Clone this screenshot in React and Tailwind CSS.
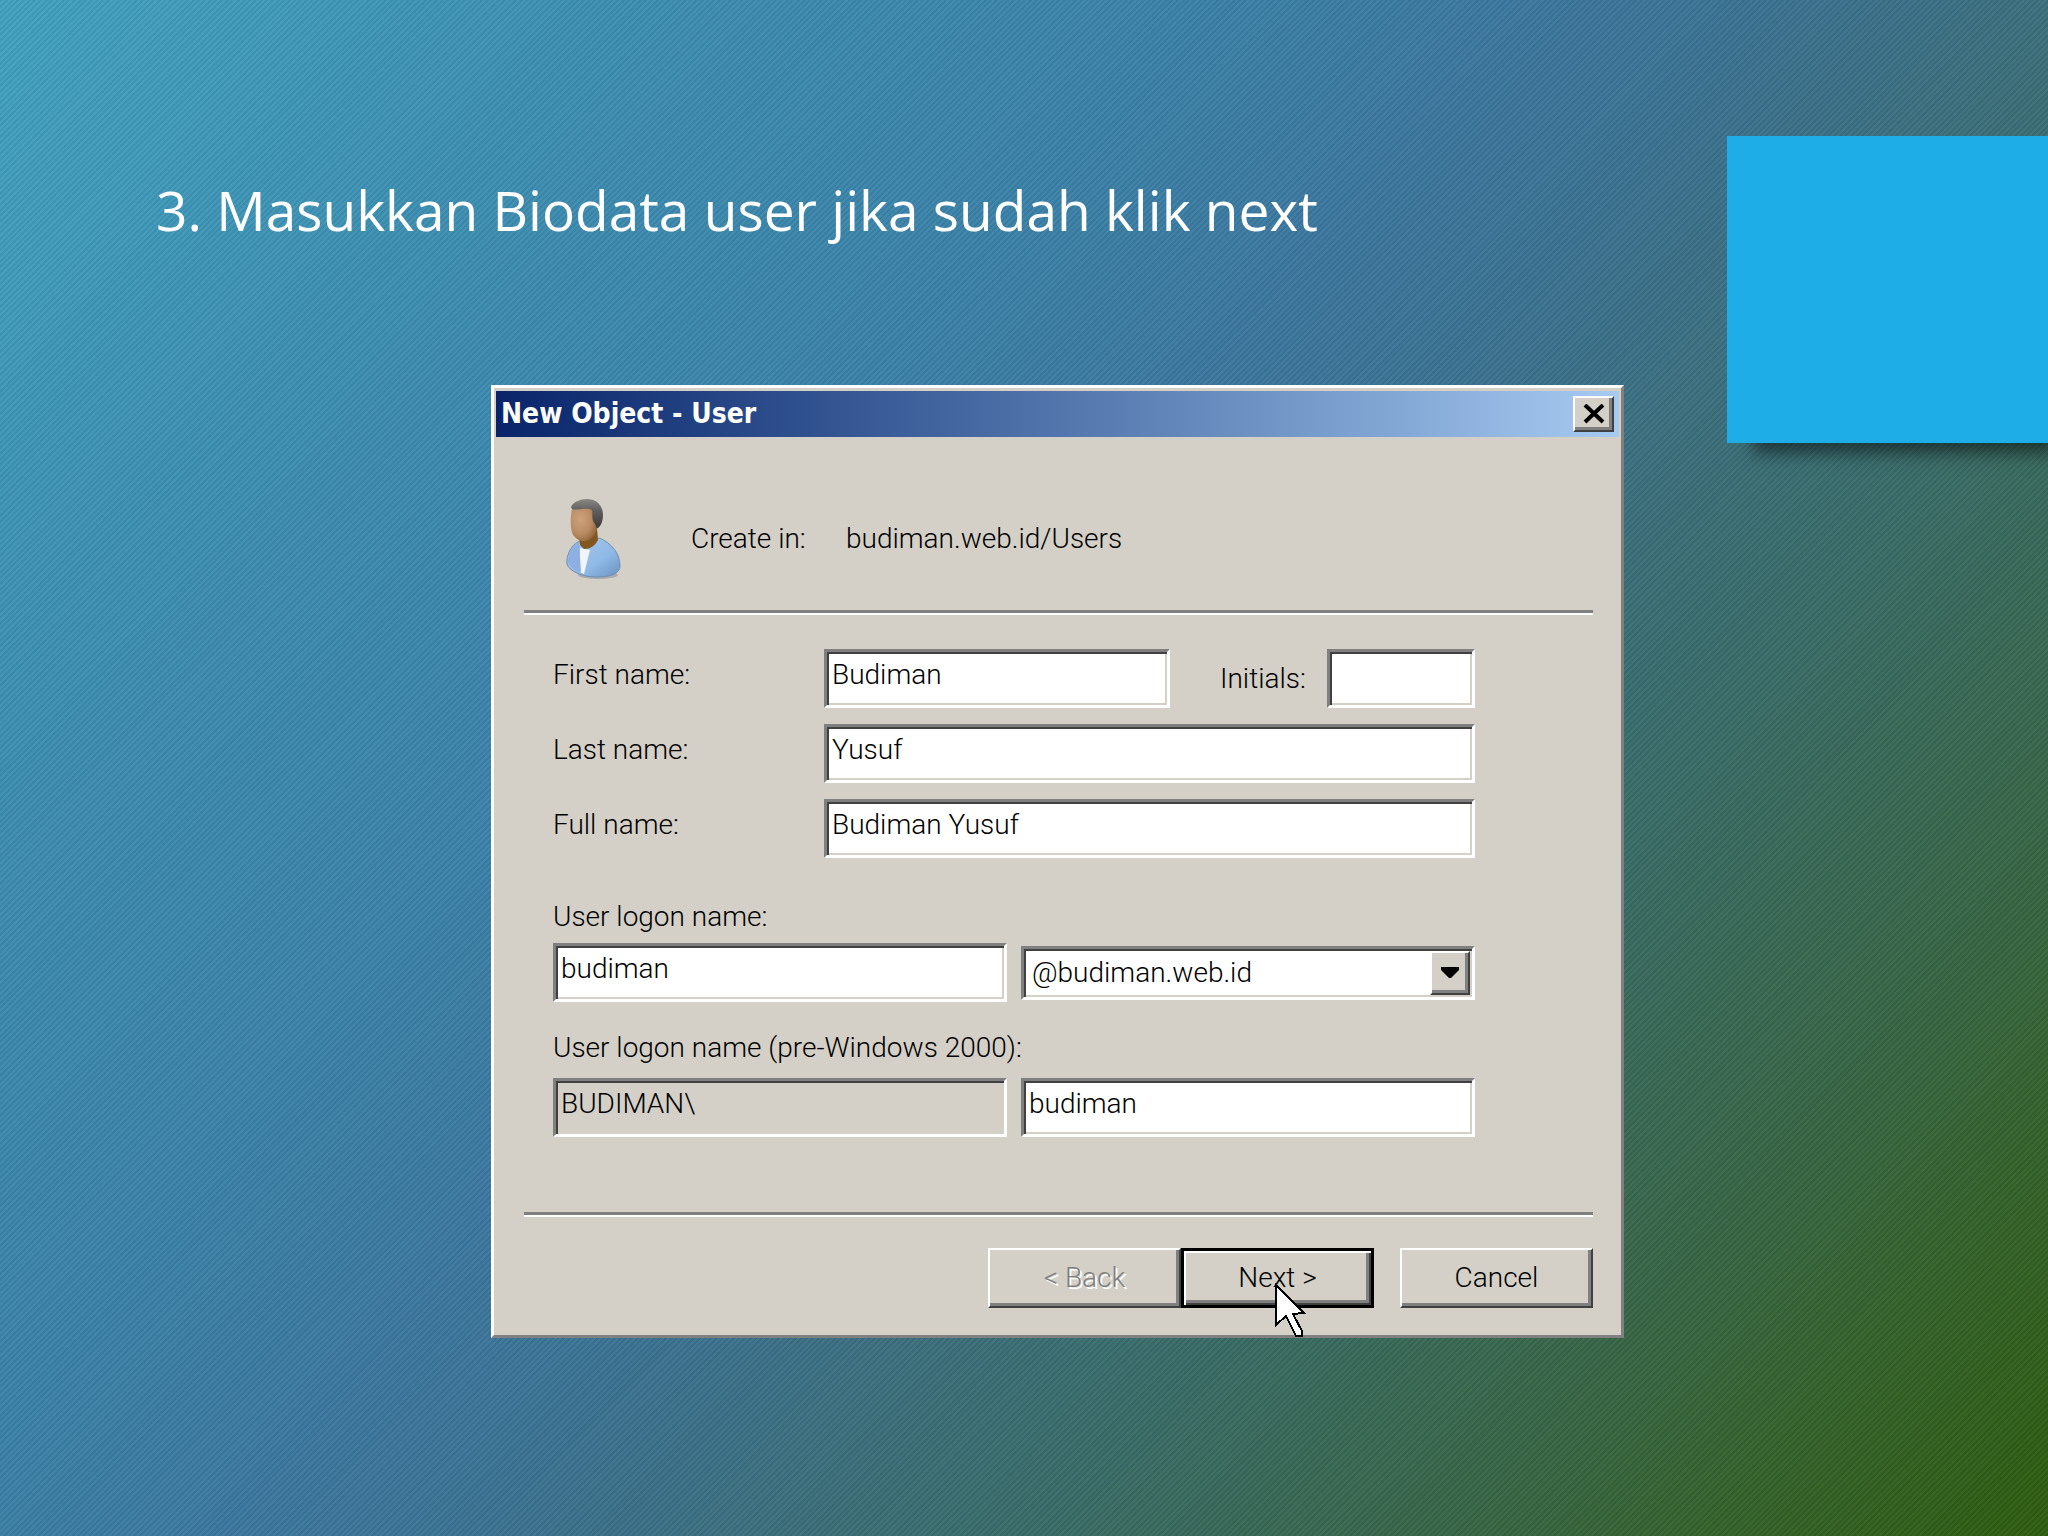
import React, { useState } from "react";

const RAISED =
  "border-2 border-t-white border-l-white border-r-[#404040] border-b-[#404040] shadow-[inset_-3px_-3px_0_#808080] bg-[#d4d0c8]";
const SUNKEN =
  "border-[3px] border-t-[#808080] border-l-[#808080] border-r-white border-b-white shadow-[inset_2px_2px_0_#404040,inset_-2px_-2px_0_#d4d0c8]";

const UserIcon = () => (
  <svg width="58" height="82" viewBox="0 0 58 82" aria-hidden="true">
    <defs>
      <linearGradient id="shirt" x1="0" y1="0" x2="1" y2="1">
        <stop offset="0" stopColor="#a9c8ee" />
        <stop offset="0.6" stopColor="#8fb9e6" />
        <stop offset="1" stopColor="#6a92c0" />
      </linearGradient>
      <radialGradient id="skin" cx="0.35" cy="0.4" r="0.75">
        <stop offset="0" stopColor="#cda37d" />
        <stop offset="0.55" stopColor="#b98b62" />
        <stop offset="1" stopColor="#85582b" />
      </radialGradient>
      <linearGradient id="hair" x1="0" y1="0" x2="0" y2="1">
        <stop offset="0" stopColor="#8a8883" />
        <stop offset="0.4" stopColor="#5f5f60" />
        <stop offset="1" stopColor="#3d3a38" />
      </linearGradient>
    </defs>
    <ellipse cx="32" cy="77" rx="20" ry="4" fill="#8c9399" opacity="0.6" />
    <path
      d="M12 44C5 47 0 58 1 66C3 73 16 79 30 79C44 79 54 76 54 68C54 56 46 45 33 40L14 43Z"
      fill="url(#shirt)"
      stroke="#6f8eb0"
      strokeWidth="1"
    />
    <path d="M14 50L24 52L18 76L14 74Z" fill="#f1f5fb" />
    <path d="M13 44L15 74C8 72 3 68 2 64C2 56 6 47 13 44Z" fill="#8db0e2" />
    <path d="M13 38L31 30L32 42C29 48 24 51 18 51L14 47Z" fill="#82561f" />
    <path
      d="M6 11C4 20 4 33 8 38C11 42 16 44 20 43C27 41 31 34 32 27L31 11L18 7Z"
      fill="url(#skin)"
    />
    <path
      d="M5 9C7 4 14 1 21 1C31 1 37 8 37 17C37 23 35 28 32 30C30 31 30 27 29 26C25 22 27 15 26 12C19 9 12 13 6 11Z"
      fill="url(#hair)"
    />
  </svg>
);

const MouseCursor = () => (
  <svg
    className="pointer-events-none absolute left-[93px] top-[35px] z-10"
    width="34"
    height="56"
    viewBox="-1 -2 34 56"
    shapeRendering="crispEdges"
    aria-hidden="true"
  >
    <path
      d="M1 0L1 40L11 31L21 51L27 51L27 46L18 29L29 28Z"
      fill="#ffffff"
      stroke="#000000"
      strokeWidth="2"
    />
  </svg>
);

const Divider = () => (
  <div className="h-[5px] border-t-[3px] border-b-2 border-t-[#808080] border-b-white" />
);

const TextField = ({ className = "", ...props }) => (
  <input
    type="text"
    className={`h-[59px] min-w-0 rounded-none px-[5px] pb-[8px] outline-none ${SUNKEN} ${className}`}
    {...props}
  />
);

const App = () => {
  const [user, setUser] = useState({
    firstName: "Budiman",
    initials: "",
    lastName: "Yusuf",
    fullName: "Budiman Yusuf",
    logonName: "budiman",
    domain: "@budiman.web.id",
    oldLogonName: "budiman",
  });

  const handleChange = (e) => {
    setUser({ ...user, [e.target.id]: e.target.value });
  };

  return (
    <div className="flex min-h-screen items-start bg-[repeating-linear-gradient(135deg,rgba(0,20,40,0.06)_0px,rgba(0,20,40,0.06)_2px,rgba(255,255,255,0.03)_2px,rgba(255,255,255,0.03)_4px),linear-gradient(130deg,#42a2bf_0%,#3d8cb0_22%,#3c82a8_36%,#3d779e_46%,#3c7392_53%,#3c7080_60%,#3a6c66_70%,#386540_84%,#35622a_90%,#2e5d0e_100%)]">
      <main className="flex-1 pt-[170px]">
        <h1 className="pl-[156px] font-['Open_Sans',sans-serif] text-[55px] leading-[80px] font-medium text-white">
          3. Masukkan Biodata user jika sudah klik next
        </h1>

        <section className="mt-[135px] ml-[491px] w-[1133px] border-[3px] border-t-white border-l-white border-r-[#808080] border-b-[#808080] bg-[#d4d0c8] font-[Roboto,sans-serif] text-[28px] leading-[40px] font-light text-black">
          <div className="mx-[2px] mt-[3px] flex h-[46px] items-center justify-between bg-linear-to-r from-[#0a246a] to-[#a6caf0] pr-[5px] pl-[5px]">
            <h2 className="font-['DejaVu_Sans_Condensed','DejaVu_Sans',sans-serif] text-[28px] font-bold text-white">
              New Object - User
            </h2>
            <button
              aria-label="Close"
              className={`flex h-[36px] w-[41px] items-center justify-center ${RAISED}`}
            >
              <svg width="22" height="20" viewBox="0 0 22 20" aria-hidden="true">
                <path d="M2 1L20 18M20 1L2 18" stroke="#000000" strokeWidth="4" />
              </svg>
            </button>
          </div>

          <div className="pr-[28px] pb-[27px] pl-[30px]">
            <div className="flex h-[173px] items-center pt-[30px] pl-[42px]">
              <UserIcon />
              <span className="ml-[67px] w-[155px]">Create in:</span>
              <span>budiman.web.id/Users</span>
            </div>
            <Divider />

            <form className="pt-[34px] pr-[118px] pb-[75px] pl-[29px]">
              <div className="grid grid-cols-[271px_1fr] items-center gap-y-[16px]">
                <label htmlFor="firstName" className="pb-[8px]">
                  First name:
                </label>
                <div className="flex items-center">
                  <TextField
                    id="firstName"
                    className="w-[346px] bg-white"
                    value={user.firstName}
                    onChange={handleChange}
                  />
                  <label htmlFor="initials" className="flex-1 pl-[50px]">
                    Initials:
                  </label>
                  <TextField
                    id="initials"
                    className="w-[148px] bg-white"
                    value={user.initials}
                    onChange={handleChange}
                  />
                </div>
                <label htmlFor="lastName" className="pb-[8px]">
                  Last name:
                </label>
                <TextField
                  id="lastName"
                  className="bg-white"
                  value={user.lastName}
                  onChange={handleChange}
                />
                <label htmlFor="fullName" className="pb-[8px]">
                  Full name:
                </label>
                <TextField
                  id="fullName"
                  className="bg-white"
                  value={user.fullName}
                  onChange={handleChange}
                />
              </div>

              <label htmlFor="logonName" className="mt-[39px] mb-[6px] block">
                User logon name:
              </label>
              <div className="grid grid-cols-2 items-center gap-x-[14px]">
                <TextField
                  id="logonName"
                  className="bg-white"
                  value={user.logonName}
                  onChange={handleChange}
                />
                <div className="relative">
                  <select
                    id="domain"
                    aria-label="Domain"
                    value={user.domain}
                    onChange={handleChange}
                    className={`block h-[54px] w-full appearance-none rounded-none bg-white pl-[8px] outline-none ${SUNKEN}`}
                  >
                    <option>@budiman.web.id</option>
                  </select>
                  <span
                    className={`pointer-events-none absolute top-[5px] right-[5px] flex h-[44px] w-[40px] items-center justify-center ${RAISED}`}
                  >
                    <svg width="18" height="11" viewBox="0 0 18 11" aria-hidden="true">
                      <path d="M0 0H18V3L10 11H8L0 3Z" fill="#000000" />
                    </svg>
                  </span>
                </div>
              </div>

              <label htmlFor="oldLogonName" className="mt-[26px] mb-[10px] block">
                User logon name (pre-Windows 2000):
              </label>
              <div className="grid grid-cols-2 gap-x-[14px]">
                <TextField
                  id="oldDomain"
                  aria-label="Domain (pre-Windows 2000)"
                  className="bg-[#d4d0c8]"
                  value="BUDIMAN\"
                  readOnly
                />
                <TextField
                  id="oldLogonName"
                  className="bg-white"
                  value={user.oldLogonName}
                  onChange={handleChange}
                />
              </div>
            </form>

            <Divider />
            <div className="mt-[31px] flex justify-end">
              <button
                disabled
                className={`h-[60px] w-[193px] text-[#808080] [text-shadow:2px_2px_0_#ffffff] ${RAISED}`}
              >
                &lt; Back
              </button>
              <div className="relative mr-[26px]">
                <button className="h-[60px] w-[193px] border-[3px] border-black bg-[#d4d0c8] shadow-[inset_2px_2px_0_#ffffff,inset_-2px_-2px_0_#404040,inset_-5px_-5px_0_#808080]">
                  Next &gt;
                </button>
                <MouseCursor />
              </div>
              <button className={`h-[60px] w-[193px] ${RAISED}`}>Cancel</button>
            </div>
          </div>
        </section>
      </main>

      <aside className="mt-[136px] h-[307px] w-[321px] bg-[#1eade6] shadow-[18px_18px_16px_-8px_rgba(0,0,0,0.5)]" />
    </div>
  );
};

export default App;
